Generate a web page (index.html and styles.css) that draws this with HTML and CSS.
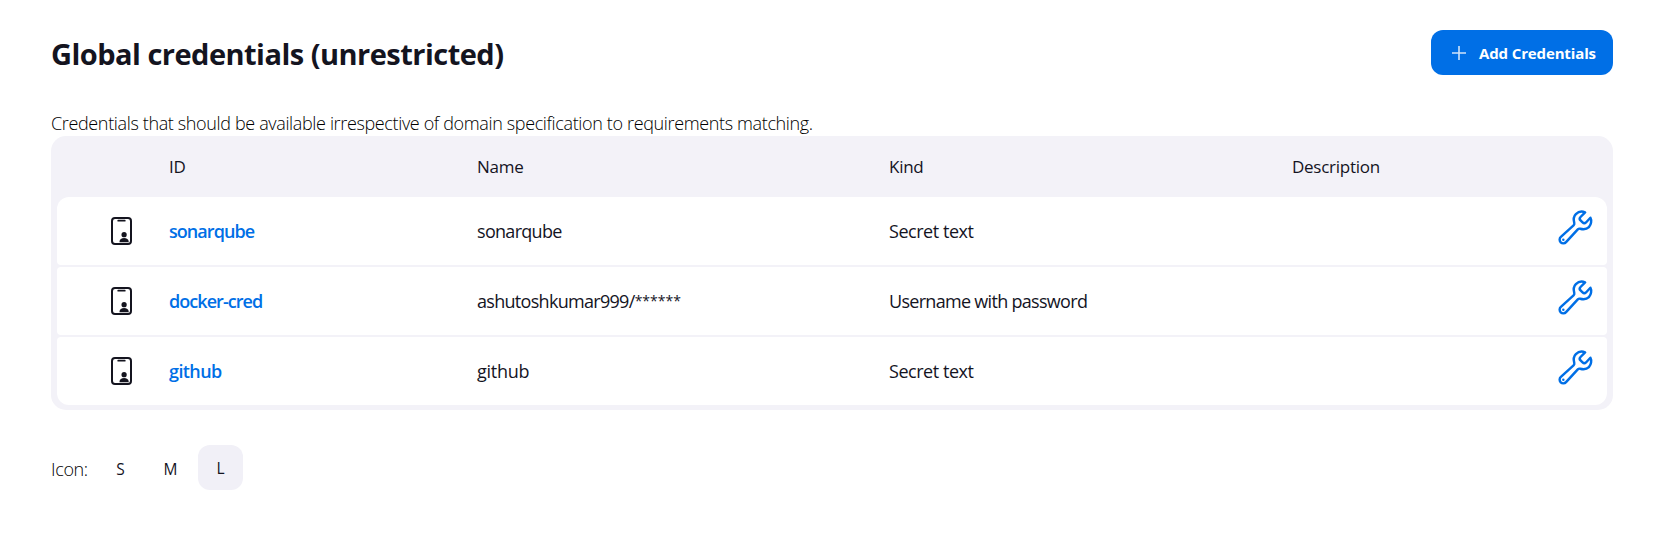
FILE: index.html
```html
<!DOCTYPE html>
<html lang="en"><head><meta charset="utf-8"><title>Global credentials</title><link rel="stylesheet" href="styles.css"></head>
<body>
<svg class="sprite" aria-hidden="true">
<symbol id="card" viewBox="0 0 21 28"><rect x="1" y="1" width="19" height="26" rx="3" fill="none" stroke="currentColor" stroke-width="2"/><path d="M7.2 3.7h6.6" stroke="currentColor" stroke-width="1.7" stroke-linecap="round"/><circle cx="13.1" cy="17.7" r="2.6"/><path d="M8.500 25.300v-.6c0-2.400 2.100-3.700 4.600-3.700s4.600 1.300 4.600 3.700v.6z"/></symbol>
<symbol id="wrench" viewBox="0 0 512 512"><path d="M393.87 190a32.1 32.1 0 01-45.25 0l-26.57-26.57a32.09 32.09 0 010-45.26L382.19 58a1 1 0 00-.3-1.64c-38.82-16.64-89.15-8.16-121.11 23.57-30.58 30.35-32.32 76-21.12 115.84a31.93 31.93 0 01-9.06 32.08L64 380a48.17 48.17 0 1068 68l153.86-167a31.93 31.93 0 0131.6-9.13c39.54 10.59 84.54 8.6 114.72-21.67 32.49-32.58 36.8-88.79 20.79-121.57a1 1 0 00-1.61-.31z" fill="none" stroke="currentColor" stroke-width="32" stroke-linecap="round" stroke-miterlimit="10"/><circle cx="96" cy="416" r="16"/></symbol>
</svg>
<header class="bar"><h1 class="title">Global credentials (unrestricted)</h1>
<button class="add"><svg class="plus" viewBox="0 0 14 14"><path d="M7 0v14M0 7h14"/></svg><span>Add Credentials</span></button></header>
<p class="intro">Credentials that should be available irrespective of domain specification to requirements matching.</p>
<main class="table">
<div class="row head"><i></i><span>ID</span><span>Name</span><span>Kind</span><span>Description</span></div>
<div class="body">
<div class="row"><svg class="card"><use href="#card"/></svg><a class="link tight">sonarqube</a><span class="tight">sonarqube</span><span class="snug">Secret text</span><span></span><svg class="wrench"><use href="#wrench"/></svg></div>
<div class="row"><svg class="card"><use href="#card"/></svg><a class="link tight">docker-cred</a><span class="tight">ashutoshkumar999/<span class="mask">******</span></span><span class="tight">Username with password</span><span></span><svg class="wrench"><use href="#wrench"/></svg></div>
<div class="row"><svg class="card"><use href="#card"/></svg><a class="link snug">github</a><span class="loose">github</span><span class="snug">Secret text</span><span></span><svg class="wrench"><use href="#wrench"/></svg></div>
</div></main>
<footer class="sizes"><span class="label">Icon:</span><span class="size">S</span><span class="size">M</span><span class="size active">L</span></footer>
</body></html>
```
FILE: styles.css
```css
* { box-sizing: border-box; }
body { margin: 0; padding: 30px 49px 0 51px; background: #fff; color: #14141f; font-family: "Open Sans", "Noto Sans", sans-serif; font-size: 18px; }
.sprite { display: none; }
.bar { display: flex; justify-content: space-between; height: 45px; align-items: center; }
.title { margin: 3px 0 0; font-size: 29px; line-height: 40px; font-weight: 700; letter-spacing: -.52px; }
.add { display: flex; align-items: center; width: 182px; height: 45px; padding: 0 0 0 21px; gap: 13px; border: 0; border-radius: 12px; background: #006fe6; color: #fff; font: 700 15px/20px "Open Sans", sans-serif; letter-spacing: -.13px; white-space: nowrap; }
.plus { width: 14px; height: 14px; stroke: #cfe3fa; stroke-width: 1.6; flex: none; }
.intro { margin: 36px 0 0; height: 25px; line-height: 25px; font-weight: 300; letter-spacing: -.36px; white-space: nowrap; color: #000; }
.table { height: 274px; padding: 0 6px 5px; border-radius: 15px; background: #f3f2f8; }
.row { display: grid; grid-template-columns: 112px 308px 412px 403px 263px 40px; align-items: center; height: 68px; background: #fff; border-radius: 4px; font-weight: 500; white-space: nowrap; }
.head { height: 61px; background: none; font-size: 17px; letter-spacing: -.27px; }
.body { display: grid; gap: 2px; }
.body .row:first-child { border-radius: 12px 12px 4px 4px; }
.body .row:last-child { border-radius: 4px 4px 12px 12px; }
.card { width: 21px; height: 28px; margin-left: 54px; fill: currentColor; }
.wrench { width: 39px; height: 39px; margin: 0 0 7px 1.2px; color: #006fe6; fill: currentColor; }
.link { color: #006fe6; font-weight: 600; }
.tight { letter-spacing: -.7px; }
.snug { letter-spacing: -.46px; }
.loose { letter-spacing: -.25px; }
.mask { font-size: 14px; letter-spacing: 0; vertical-align: 2px; line-height: 1; }
.link.tight { letter-spacing: -.95px; }
.link.snug { letter-spacing: -.6px; }
.sizes { display: flex; align-items: center; height: 45px; margin-top: 35px; gap: 5px; }
.label { width: 42px; padding-top: 2px; font-weight: 300; letter-spacing: -.35px; color: #000; }
.size { width: 45px; height: 45px; border-radius: 12px; text-align: center; font-size: 15.5px; font-weight: 500; line-height: 49px; }
.active { background: #f1f0f7; line-height: 47px; }
```
